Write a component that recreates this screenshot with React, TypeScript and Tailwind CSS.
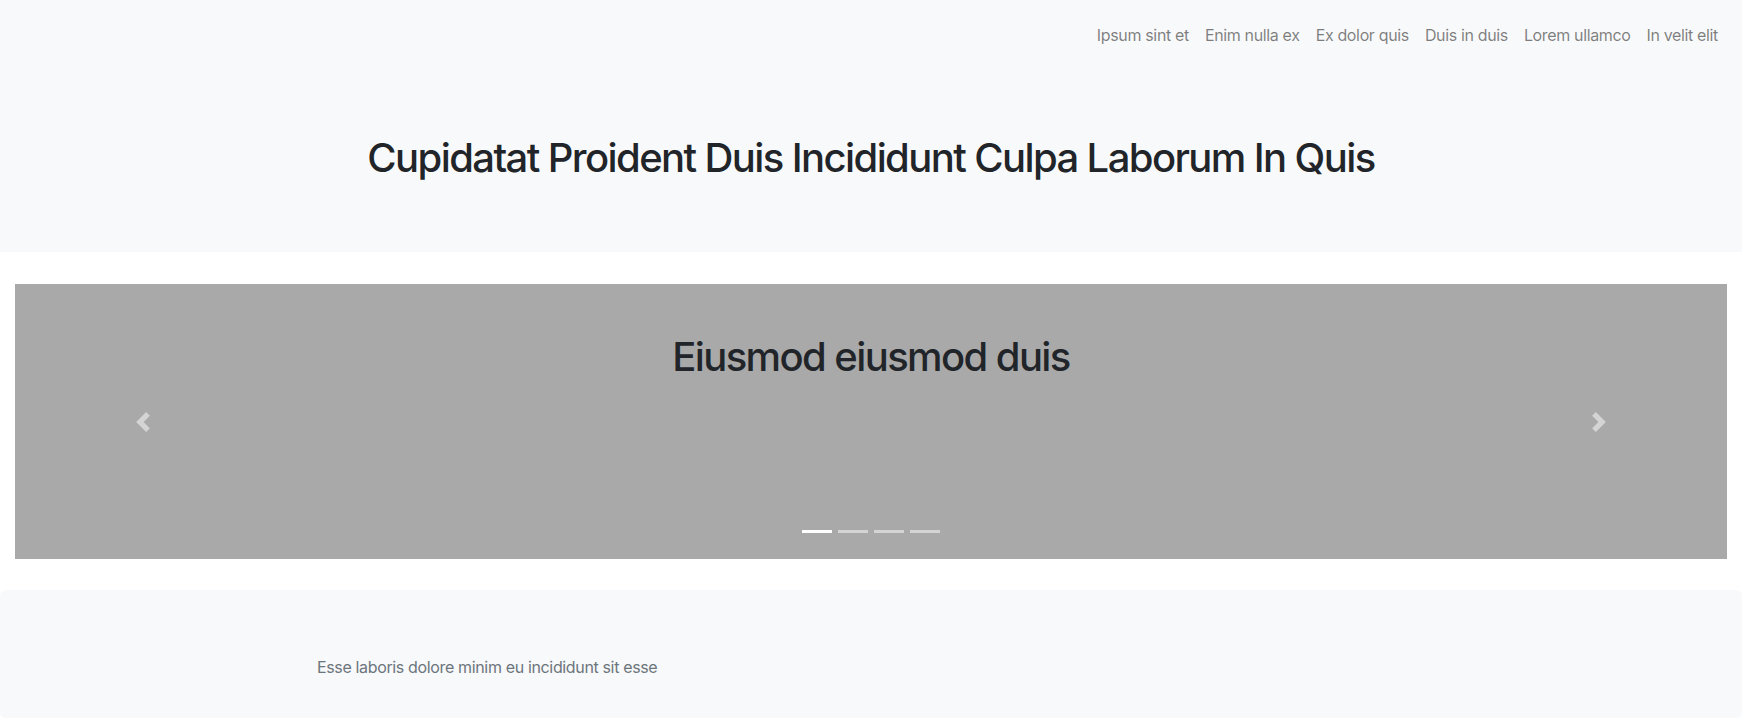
import React from "react";

const navItems = ["Ipsum sint et", "Enim nulla ex", "Ex dolor quis", "Duis in duis", "Lorem ullamco", "In velit elit"];

function Chevron({ dir }: { dir: "left" | "right" }) {
  return (
    <svg width="20" height="20" viewBox="0 0 8 8" fill="#fff" aria-hidden>
      {dir === "left" ? (
        <path d="M5.25 0l-4 4 4 4 1.5-1.5L4.25 4l2.5-2.5L5.25 0z" />
      ) : (
        <path d="M2.75 0l-1.5 1.5L3.75 4l-2.5 2.5L2.75 8l4-4-4-4z" />
      )}
    </svg>
  );
}

export default function App() {
  return (
    <div
      className="min-h-[719px] bg-white text-[#212529]"
      style={{ fontFamily: 'Inter, "Noto Sans", "Liberation Sans", sans-serif' }}
    >
      <header className="bg-[#f8f9fa] h-[252px] flex flex-col">
        <nav className="flex justify-end pt-[15px] pr-[16px]">
          {navItems.map((t) => (
            <a key={t} className="px-2 py-2 text-[16px] leading-6 text-black/50 tracking-[-0.022em]">
              {t}
            </a>
          ))}
        </nav>
        <h1 className="mt-[79px] text-center text-[40px] leading-[48px] font-medium text-[#212529] tracking-[-0.04em]">
          Cupidatat Proident Duis Incididunt Culpa Laborum In Quis
        </h1>
      </header>

      <div className="pt-[32px] px-[15px]">
        <div className="relative h-[275px] bg-[#a9a9a9] overflow-hidden">
          <div className="pt-[49px] text-center">
            <h2 className="text-[40px] leading-[48px] font-medium text-[#212529] tracking-[-0.04em]">
              Eiusmod eiusmod duis
            </h2>
          </div>
          <div className="absolute left-0 top-0 bottom-0 w-[15%] flex items-center justify-center opacity-50">
            <Chevron dir="left" />
          </div>
          <div className="absolute right-0 top-0 bottom-0 w-[15%] flex items-center justify-center opacity-50">
            <Chevron dir="right" />
          </div>
          <div className="absolute left-0 right-0 bottom-0 mb-[16px] flex justify-center">
            {[0, 1, 2, 3].map((i) => (
              <span
                key={i}
                className={
                  "mx-[3px] w-[30px] h-[3px] my-[10px] bg-white " + (i === 0 ? "opacity-100" : "opacity-50")
                }
              />
            ))}
          </div>
        </div>
      </div>

      <footer className="mt-[31px] h-[128px] bg-[#f8f9fa] rounded-[6px] flex items-center pl-[317px] pt-[26px]">
        <p className="text-[16px] leading-6 text-[#6c757d] tracking-[-0.022em]">
          Esse laboris dolore minim eu incididunt sit esse
        </p>
      </footer>
    </div>
  );
}
